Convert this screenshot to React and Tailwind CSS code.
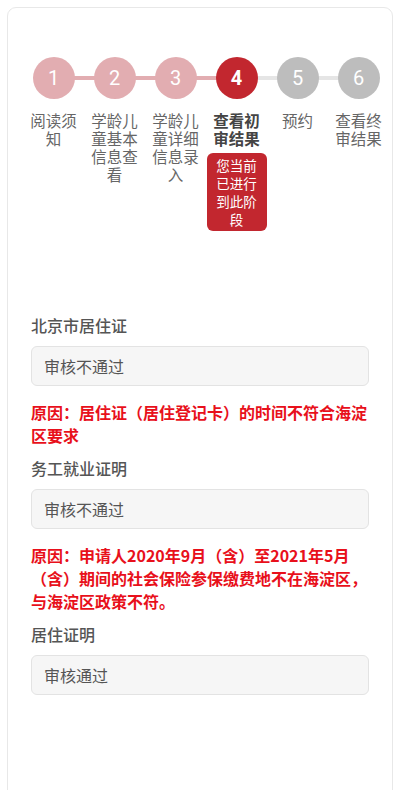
const FONT = { fontFamily: '"Noto Sans CJK SC", "Noto Sans", sans-serif' }

const steps = [
  { n: 1, label: '阅读须知', state: 'done' },
  { n: 2, label: '学龄儿童基本信息查看', state: 'done' },
  { n: 3, label: '学龄儿童详细信息录入', state: 'done' },
  { n: 4, label: '查看初审结果', state: 'active' },
  { n: 5, label: '预约', state: 'todo' },
  { n: 6, label: '查看终审结果', state: 'todo' },
]

const fields = [
  {
    title: '北京市居住证',
    value: '审核不通过',
    reason: '原因：居住证（居住登记卡）的时间不符合海淀区要求',
  },
  {
    title: '务工就业证明',
    value: '审核不通过',
    reason: '原因：申请人2020年9月（含）至2021年5月（含）期间的社会保险参保缴费地不在海淀区，与海淀区政策不符。',
  },
  { title: '居住证明', value: '审核通过' },
]

function Step({ step, index }) {
  const circle =
    step.state === 'done'
      ? 'bg-[#e2adb1]'
      : step.state === 'active'
        ? 'bg-[#c2272f] font-bold'
        : 'bg-[#bdbdbd]'
  const leftLine = index <= 3 ? 'bg-[#e2adb1]' : 'bg-[#e5e5e5]'
  const rightLine = index < 3 ? 'bg-[#e2adb1]' : 'bg-[#e5e5e5]'

  return (
    <div className="flex flex-col items-center">
      <div className="relative flex h-[42px] w-full items-center justify-center">
        {index > 0 && <div className={`absolute left-0 top-[19px] h-[4px] w-1/2 ${leftLine}`} />}
        {index < steps.length - 1 && (
          <div className={`absolute right-0 top-[19px] h-[4px] w-1/2 ${rightLine}`} />
        )}
        <div
          className={`relative flex h-[42px] w-[42px] items-center justify-center rounded-full text-[20px] text-white ${circle}`}
          style={{ fontFamily: 'Roboto, sans-serif' }}
        >
          {step.n}
        </div>
      </div>
      <div
        className={`mt-[12px] w-[48px] text-center text-[15.5px] leading-[18px] ${
          step.state === 'active' ? 'font-bold text-[#444]' : 'text-[#666]'
        }`}
      >
        {step.label}
      </div>
      {step.state === 'active' && (
        <div className="mt-[6px] w-[60px] rounded-[6px] bg-[#c2272f] px-[9px] py-[3px] text-center text-[13.5px] leading-[18px] text-white">
          您当前已进行到此阶段
        </div>
      )}
    </div>
  )
}

export default function App() {
  return (
    <div className="min-h-screen bg-white px-[7px] pt-[7px]" style={FONT}>
      <div className="h-[820px] rounded-[9px] border border-[#e8e8e8] pt-[49px]">
        <div className="ml-[15px] grid w-[366px] grid-cols-6">
          {steps.map((s, i) => (
            <Step key={s.n} step={s} index={i} />
          ))}
        </div>

        <div className="mt-[82px] px-[23px]">
          {fields.map((f, i) => (
            <div key={f.title} className={i > 0 ? 'mt-[9px]' : ''}>
              <div className="text-[16px] font-medium leading-6 text-[#555]">{f.title}</div>
              <div className="mt-[9px] flex h-[40px] items-center rounded-[6px] border border-[#e3e3e3] bg-[#f6f6f6] px-[12px] text-[16px] text-[#555]">
                {f.value}
              </div>
              {f.reason && (
                <div className="mt-[15px] text-[16px] font-bold leading-[23px] text-[#e8101b]">
                  {f.reason}
                </div>
              )}
            </div>
          ))}
        </div>
      </div>
    </div>
  )
}
